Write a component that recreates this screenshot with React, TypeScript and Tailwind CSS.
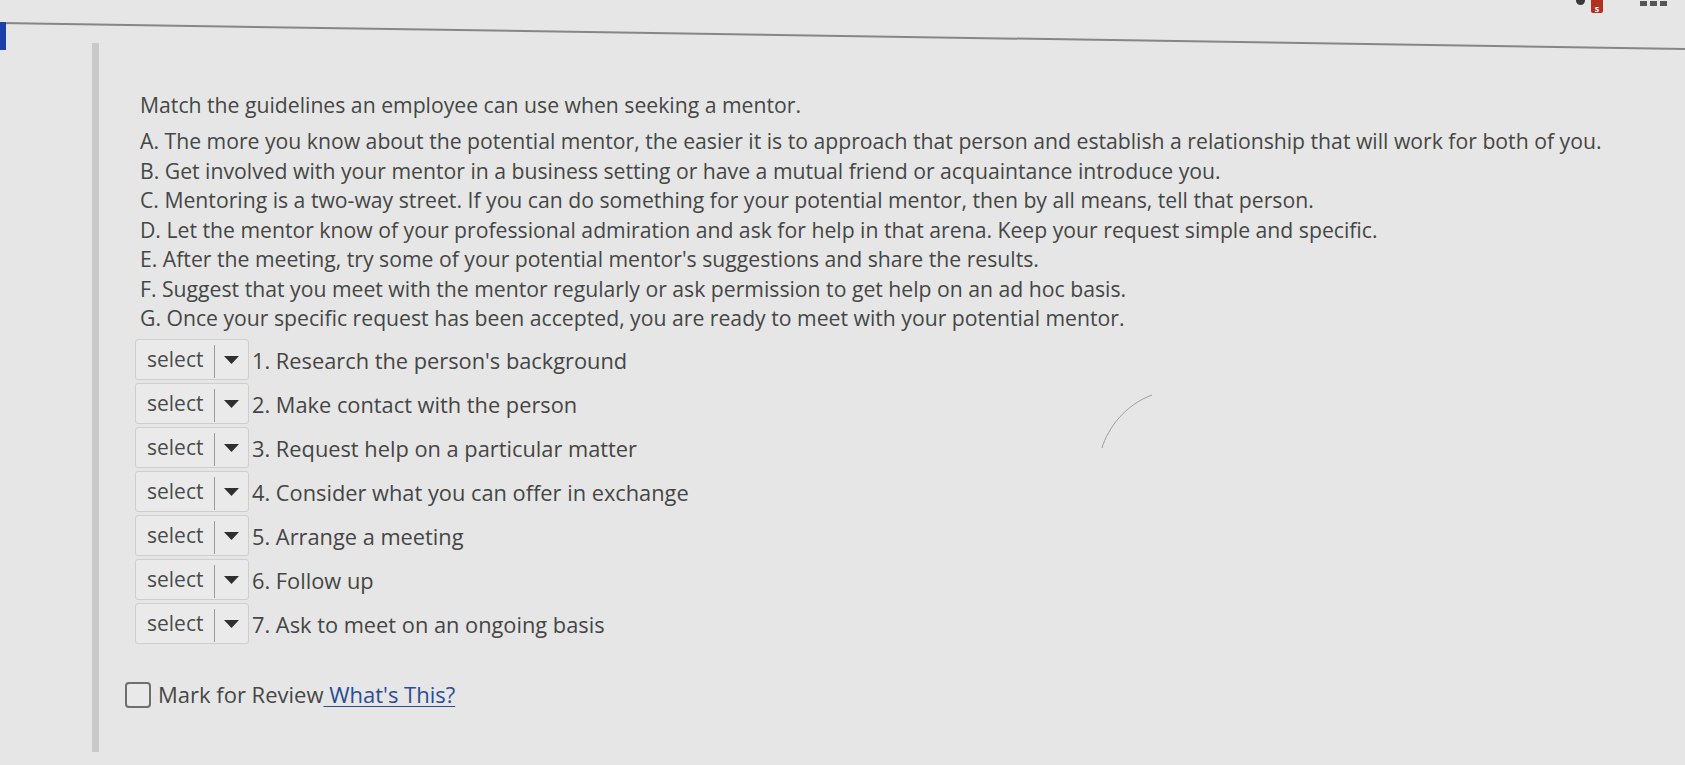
const guidelines = [
  "A. The more you know about the potential mentor, the easier it is to approach that person and establish a relationship that will work for both of you.",
  "B. Get involved with your mentor in a business setting or have a mutual friend or acquaintance introduce you.",
  "C. Mentoring is a two-way street. If you can do something for your potential mentor, then by all means, tell that person.",
  "D. Let the mentor know of your professional admiration and ask for help in that arena. Keep your request simple and specific.",
  "E. After the meeting, try some of your potential mentor's suggestions and share the results.",
  "F. Suggest that you meet with the mentor regularly or ask permission to get help on an ad hoc basis.",
  "G. Once your specific request has been accepted, you are ready to meet with your potential mentor.",
];

const steps = [
  "1. Research the person's background",
  "2. Make contact with the person",
  "3. Request help on a particular matter",
  "4. Consider what you can offer in exchange",
  "5. Arrange a meeting",
  "6. Follow up",
  "7. Ask to meet on an ongoing basis",
];

function SelectBox() {
  return (
    <div className="flex h-[41px] w-[114px] shrink-0 items-center rounded-[3px] border border-[#cdcecd] bg-[#e9eae9]">
      <span className="w-[78px] pl-[11px] text-[21px] leading-none text-[#4a4a4a]">select</span>
      <span className="mt-[4px] h-[33px] w-px bg-[#9a9a9a]" />
      <span className="flex flex-1 items-center justify-center">
        <svg width="15" height="8" viewBox="0 0 15 8">
          <path d="M0 0 H15 L7.5 8 Z" fill="#2f2f2f" />
        </svg>
      </span>
    </div>
  );
}

export default function App() {
  return (
    <div
      className="relative h-[765px] w-full overflow-hidden bg-[#e5e6e5] text-[#464646]"
      style={{ fontFamily: '"Open Sans", "Noto Sans", sans-serif' }}
    >
      {/* top toolbar strip */}
      <div className="flex h-[22px] items-start justify-end pr-[18px]">
        <div className="mr-[6px] h-[5px] w-[9px] rounded-b-full bg-[#3a3a3a]" />
        <div className="flex h-[13px] w-[12px] items-end justify-center rounded-b-[2px] bg-[#b3301f] text-[9px] font-bold leading-none text-white">
          s
        </div>
        <div className="ml-[37px] mt-[1px] flex gap-[3px]">
          <span className="h-[5px] w-[7px] bg-[#555]" />
          <span className="h-[5px] w-[7px] bg-[#555]" />
          <span className="h-[5px] w-[7px] bg-[#555]" />
        </div>
      </div>

      {/* header rule */}
      <div className="h-[2px] w-[1700px] origin-left rotate-[0.88deg] bg-[#858685]" />
      <div className="absolute left-0 top-[22px] h-[28px] w-[6px] bg-[#1d3faa]" />

      <div className="flex">
        {/* left rail */}
        <div className="ml-[92px] mt-[19px] h-[709px] w-[7px] bg-[#c8c9c8]" />

        <div className="ml-[41px] pt-[66px]">
          <div className="text-[21.2px] leading-[29.5px]">
            <div className="mb-[6.5px]">Match the guidelines an employee can use when seeking a mentor.</div>
            {guidelines.map((g) => (
              <div key={g} className="whitespace-nowrap">
                {g}
              </div>
            ))}
          </div>

          <div className="ml-[-5px] mt-[6.5px] flex flex-col gap-[3px]">
            {steps.map((s) => (
              <div key={s} className="flex items-center">
                <SelectBox />
                <span className="ml-[3px] pt-[4px] text-[21.8px] text-[#454545]">{s}</span>
              </div>
            ))}
          </div>

          <div className="ml-[-15px] mt-[34px] flex items-center text-[22px]">
            <span className="h-[26px] w-[26px] rounded-[4px] border-2 border-[#6e6e6e] bg-[#e8e9e8]" />
            <span className="ml-[7px] text-[#474747]">Mark for Review</span>
            <a className="whitespace-pre text-[#2c4c94] underline decoration-1 underline-offset-[3px]" href="#">
              {"\u00a0What's This?"}
            </a>
          </div>
        </div>
      </div>

      {/* faint scratch on the screen */}
      <svg className="absolute left-[1100px] top-[393px]" width="60" height="60" viewBox="0 0 60 60">
        <path d="M2 55 C8 35 25 12 52 2" stroke="#9ea0a0" strokeWidth="1" fill="none" />
      </svg>
    </div>
  );
}
